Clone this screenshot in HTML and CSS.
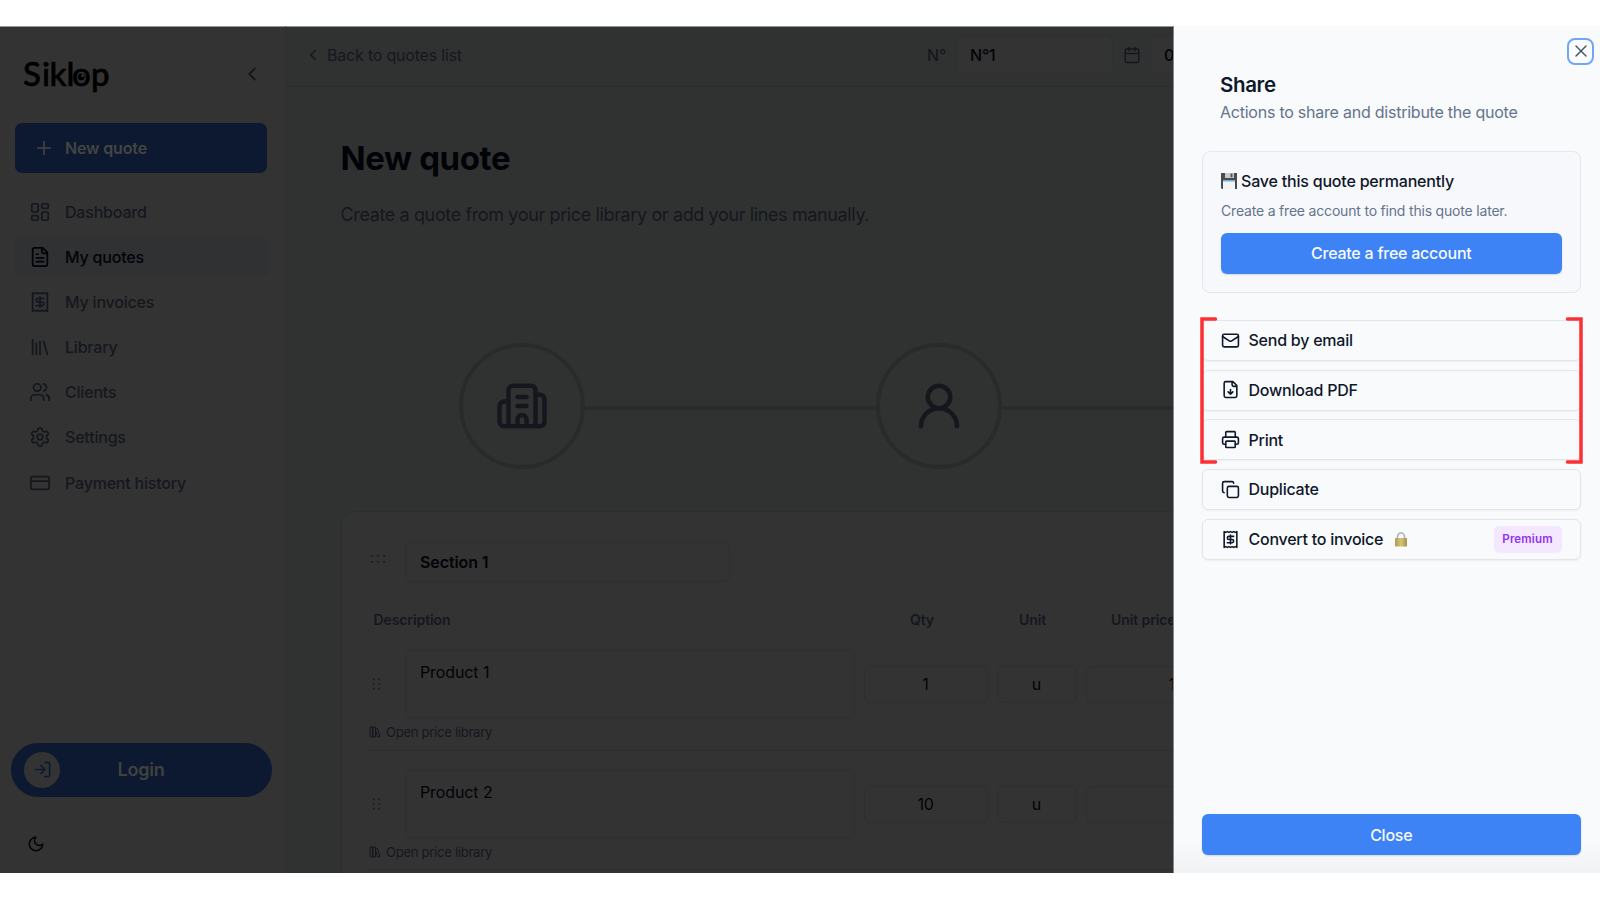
FILE: index.html
```html
<!DOCTYPE html>
<html lang="en">
<head>
<meta charset="utf-8">
<title>Siklop - New quote</title>
<link rel="stylesheet" href="styles.css">
</head>
<body>
<svg class="defs" width="0" height="0">
  <symbol id="receipt" viewBox="0 0 24 24"><path d="M4 2v20l2-1 2 1 2-1 2 1 2-1 2 1 2-1 2 1V2l-2 1-2-1-2 1-2-1-2 1-2-1-2 1Z"/><path d="M16 8h-6a2 2 0 1 0 0 4h4a2 2 0 1 1 0 4H8M12 17.5v-11"/></symbol>
  <symbol id="grip" viewBox="0 0 24 24"><circle cx="7" cy="12" r="1"/><circle cx="7" cy="5" r="1"/><circle cx="7" cy="19" r="1"/><circle cx="15" cy="12" r="1"/><circle cx="15" cy="5" r="1"/><circle cx="15" cy="19" r="1"/></symbol>
  <symbol id="books" viewBox="0 0 24 24"><rect x="2" y="2" width="6" height="20" rx="1"/><path d="M8 2h5v20H8zM13 6l4-1 5 16-4 1z"/></symbol>
</svg>
<div class="app">
  <aside class="sidebar">
    <div class="brand">
      <svg class="logo" viewBox="0 0 90 40"><text y="31.500" x="0 19 26.500 43.500 49 68">Siklop</text><circle class="iris" cx="58.300" cy="22.900" r="3.400"/><circle class="glint" cx="59.500" cy="21.600" r="1.200"/></svg>
      <svg class="i collapse" viewBox="0 0 24 24"><path d="m15 18-6-6 6-6"/></svg>
    </div>
    <div class="new-btn"><svg class="i" viewBox="0 0 24 24"><path d="M5 12h14M12 5v14"/></svg><span>New quote</span></div>
    <nav class="nav">
      <a><svg class="i" viewBox="0 0 24 24"><rect x="3" y="3" width="7" height="9" rx="1"/><rect x="14" y="3" width="7" height="5" rx="1"/><rect x="14" y="12" width="7" height="9" rx="1"/><rect x="3" y="16" width="7" height="5" rx="1"/></svg><span>Dashboard</span></a>
      <a class="active"><svg class="i" viewBox="0 0 24 24"><path d="M15 2H6a2 2 0 0 0-2 2v16a2 2 0 0 0 2 2h12a2 2 0 0 0 2-2V7ZM14 2v4a2 2 0 0 0 2 2h4M10 9H8M16 13H8M16 17H8"/></svg><span>My quotes</span></a>
      <a><svg class="i"><use href="#receipt"/></svg><span>My invoices</span></a>
      <a><svg class="i" viewBox="0 0 24 24"><path d="m16 6 4 14M12 6v14M8 8v12M4 4v16"/></svg><span>Library</span></a>
      <a><svg class="i" viewBox="0 0 24 24"><path d="M16 21v-2a4 4 0 0 0-4-4H6a4 4 0 0 0-4 4v2M22 21v-2a4 4 0 0 0-3-3.870M16 3.130a4 4 0 0 1 0 7.750"/><circle cx="9" cy="7" r="4"/></svg><span>Clients</span></a>
      <a><svg class="i" viewBox="0 0 24 24"><path d="M9.671 4.136a2.340 2.340 0 0 1 4.659 0 2.340 2.340 0 0 0 3.319 1.915 2.340 2.340 0 0 1 2.330 4.033 2.340 2.340 0 0 0 0 3.831 2.340 2.340 0 0 1-2.330 4.033 2.340 2.340 0 0 0-3.319 1.915 2.340 2.340 0 0 1-4.659 0 2.340 2.340 0 0 0-3.320-1.915 2.340 2.340 0 0 1-2.330-4.033 2.340 2.340 0 0 0 0-3.831A2.340 2.340 0 0 1 6.350 6.051a2.340 2.340 0 0 0 3.319-1.915"/><circle cx="12" cy="12" r="3"/></svg><span>Settings</span></a>
      <a><svg class="i" viewBox="0 0 24 24"><rect x="2" y="5" width="20" height="14" rx="2"/><path d="M2 10h20"/></svg><span>Payment history</span></a>
    </nav>
    <div class="login"><span class="login-icon"><svg class="i" viewBox="0 0 24 24"><path d="M15 3h4a2 2 0 0 1 2 2v14a2 2 0 0 1-2 2h-4M10 17l5-5-5-5M15 12H3"/></svg></span><span class="login-text">Login</span></div>
    <svg class="i moon" viewBox="0 0 24 24"><path d="M12 3a6 6 0 0 0 9 9 9 9 0 1 1-9-9Z"/></svg>
  </aside>
  <main class="main">
    <header class="topbar">
      <svg class="i back" viewBox="0 0 24 24"><path d="m15 18-6-6 6-6"/></svg>
      <span class="back-text">Back to quotes list</span>
      <span class="num-label">N°</span>
      <span class="field num">N°1</span>
      <svg class="i cal" viewBox="0 0 24 24"><path d="M8 2v4M16 2v4M3 10h18"/><rect x="3" y="4" width="18" height="18" rx="2"/></svg>
      <span class="field date">0</span>
    </header>
    <h1>New quote</h1>
    <p class="subtitle">Create a quote from your price library or add your lines manually.</p>
    <div class="steps">
      <div class="step"><svg class="i" viewBox="0 0 24 24"><path d="M10 12h4M10 8h4M14 21v-3a2 2 0 0 0-4 0v3M6 10H4a2 2 0 0 0-2 2v7a2 2 0 0 0 2 2h16a2 2 0 0 0 2-2V9a2 2 0 0 0-2-2h-2M6 21V5a2 2 0 0 1 2-2h8a2 2 0 0 1 2 2v16"/></svg></div>
      <div class="link"></div>
      <div class="step"><svg class="i" viewBox="0 0 24 24"><circle cx="12" cy="8" r="5"/><path d="M20 21a8 8 0 0 0-16 0"/></svg></div>
      <div class="link"></div>
    </div>
    <section class="card">
      <div class="section-row">
        <svg class="i grip-h" viewBox="0 0 24 24"><circle cx="12" cy="9" r="1"/><circle cx="20" cy="9" r="1"/><circle cx="4" cy="9" r="1"/><circle cx="12" cy="17" r="1"/><circle cx="20" cy="17" r="1"/><circle cx="4" cy="17" r="1"/></svg>
        <span class="field section-name">Section 1</span>
      </div>
      <div class="heads"><span>Description</span><span>Qty</span><span>Unit</span><span>Unit price</span></div>
      <div class="line">
        <div class="line-fields"><svg class="i grip"><use href="#grip"/></svg><div class="field desc">Product 1</div><div class="field qty">1</div><div class="field unit">u</div><div class="field price">1</div></div>
        <div class="lib"><svg class="i"><use href="#books"/></svg><span>Open price library</span></div>
      </div>
      <div class="line">
        <div class="line-fields"><svg class="i grip"><use href="#grip"/></svg><div class="field desc">Product 2</div><div class="field qty">10</div><div class="field unit">u</div><div class="field price"></div></div>
        <div class="lib"><svg class="i"><use href="#books"/></svg><span>Open price library</span></div>
      </div>
    </section>
  </main>
  <aside class="panel">
    <button class="x"><svg class="i" viewBox="0 0 24 24"><path d="M18 6 6 18M6 6l12 12"/></svg></button>
    <h2>Share</h2>
    <p class="lead">Actions to share and distribute the quote</p>
    <div class="save">
      <div class="save-title">
        <svg class="disk" viewBox="0 0 16 16"><path d="M0 0h16v16H1L0 15z" fill="#4b4b4d"/><path d="M4 0h9v5H4z" fill="#c9cacc"/><path d="M9.500 .5h2v3.800h-2z" fill="#555"/><path d="M2 7h12v9H2z" fill="#f3f3f3"/><path d="M2 7h12v1.500H2z" fill="#6fb0e8"/></svg>
        <span>Save this quote permanently</span>
      </div>
      <p>Create a free account to find this quote later.</p>
      <button class="primary">Create a free account</button>
    </div>
    <div class="actions">
      <div class="act"><svg class="i" viewBox="0 0 24 24"><rect x="2" y="4" width="20" height="16" rx="2"/><path d="m22 7-8.970 5.700a1.940 1.940 0 0 1-2.060 0L2 7"/></svg><span>Send by email</span></div>
      <div class="act"><svg class="i" viewBox="0 0 24 24"><path d="M15 2H6a2 2 0 0 0-2 2v16a2 2 0 0 0 2 2h12a2 2 0 0 0 2-2V7ZM14 2v4a2 2 0 0 0 2 2h4M12 18v-6M9 15l3 3 3-3"/></svg><span>Download PDF</span></div>
      <div class="act"><svg class="i" viewBox="0 0 24 24"><path d="M6 18H4a2 2 0 0 1-2-2v-5a2 2 0 0 1 2-2h16a2 2 0 0 1 2 2v5a2 2 0 0 1-2 2h-2M6 9V3a1 1 0 0 1 1-1h10a1 1 0 0 1 1 1v6"/><rect x="6" y="14" width="12" height="8" rx="1"/></svg><span>Print</span></div>
      <div class="act"><svg class="i" viewBox="0 0 24 24"><rect x="8" y="8" width="14" height="14" rx="2"/><path d="M4 16c-1.100 0-2-.9-2-2V4c0-1.100.9-2 2-2h10c1.100 0 2 .9 2 2"/></svg><span>Duplicate</span></div>
      <div class="act"><svg class="i"><use href="#receipt"/></svg><span>Convert to invoice</span>
        <svg class="lock" viewBox="0 0 12 15"><defs><linearGradient id="gold"><stop offset="0" stop-color="#b09a50"/><stop offset=".5" stop-color="#d6c47c"/><stop offset="1" stop-color="#a39049"/></linearGradient></defs><path d="M2.500 7V4.500a3.500 3.500 0 0 1 7 0V7" fill="none" stroke="#a9b0b8" stroke-width="1.500"/><rect y="6" width="12" height="8.500" rx=".8" fill="url(#gold)"/></svg>
        <b class="badge">Premium</b></div>
      <svg class="marks" viewBox="0 0 383 147"><path d="M15.500 2H2v143h13.500M367.500 2H381v143h-13.500"/></svg>
    </div>
    <button class="primary close">Close</button>
  </aside>
</div>
</body>
</html>
```
FILE: styles.css
```css
* { box-sizing: border-box; }
body { margin: 0; padding-top: 26px; height: 900px; overflow: hidden; background: #fff; font-family: Inter, "Liberation Sans", sans-serif; font-size: 16px; letter-spacing: -.2px; color: #020308; }
h1, h2, p { margin: 0; }
button { font: inherit; letter-spacing: inherit; padding: 0; border: 0; }
.defs { display: block; position: absolute; }
.i { fill: none; stroke: currentColor; stroke-width: 2; stroke-linecap: round; stroke-linejoin: round; flex: none; display: block; }
.app { display: grid; grid-template-columns: 286px 887px 427px; height: 847px; overflow: hidden; }

.sidebar { background: #333; border-top: 1px solid #8f9494; border-right: 1px solid #2e2f30; display: flex; flex-direction: column; color: #15171e; overflow: hidden; }
.brand { height: 96px; padding: 27px 0 0 23px; display: flex; }
.logo { width: 90px; height: 40px; overflow: visible; }
.logo text { font: 500 33px Lato, sans-serif; letter-spacing: 0; fill: #000; stroke: #000; stroke-width: .6; }
.iris { fill: #000; }
.glint { fill: #444; }
.collapse { width: 22px; height: 22px; margin: 9px 0 0 128px; }
.new-btn { margin-left: 15px; width: 252px; height: 50px; border-radius: 7px; background: #0c1930; color: #444443; font-weight: 600; letter-spacing: -.15px; display: flex; align-items: center; padding-left: 18px; }
.new-btn .i { width: 22px; height: 22px; margin-right: 10px; stroke-width: 1.7; }
.nav { margin: 18.500px 0 0 15px; width: 253px; display: flex; flex-direction: column; gap: 5.200px; font-weight: 500; }
.nav a { height: 40px; display: flex; align-items: center; padding-left: 14px; border-radius: 6px; }
.nav .i { width: 22px; height: 22px; margin-right: 14px; stroke-width: 1.900; }
.nav .active { background: #303133; color: #020308; }
.login { margin: 240px 0 0 10.500px; width: 261.500px; height: 54.500px; border-radius: 28px; background: #0c1930; display: flex; align-items: center; flex: none; }
.login-icon { width: 36px; height: 36px; border-radius: 50%; background: #333; margin-left: 13.500px; display: grid; place-items: center; color: #0c1930; }
.login-icon .i { width: 19px; height: 19px; }
.login-text { margin-left: 57.500px; color: #41423f; font-size: 18px; font-weight: 600; }
.moon { width: 18px; height: 18px; margin: 37.500px 0 0 26.500px; color: #020308; }

.main { background: #303231; border-top: 1px solid #8f9494; overflow: hidden; color: #15171e; }
.topbar { height: 60px; border-bottom: 1px solid #2b2c2d; display: flex; align-items: center; padding-bottom: 3px; width: 1200px; }
.back { width: 18px; height: 18px; margin-left: 18px; }
.back-text { margin-left: 5px; width: 600px; }
.num-label { width: 29px; font-weight: 500; }
.field { background: #333; border: 1px solid #2e2f30; border-radius: 6px; color: #020308; display: flex; align-items: center; flex: none; }
.num { width: 157px; height: 38px; padding-left: 13px; font-weight: 500; }
.cal { width: 18px; height: 18px; margin: 0 9px 0 10px; }
.date { width: 160px; height: 38px; padding-left: 13px; font-weight: 500; }
h1 { margin: 51px 0 0 54.500px; font-size: 33px; line-height: 40px; letter-spacing: -.4px; color: #020308; }
.subtitle { margin: 25px 0 0 54.500px; font-size: 18px; line-height: 24px; letter-spacing: -.375px; white-space: nowrap; }
.steps { display: flex; align-items: center; margin: 116px 0 0 173px; width: 900px; }
.step { width: 126px; height: 126px; border: 4.500px solid #292a2c; border-radius: 50%; display: grid; place-items: center; flex: none; }
.step .i { width: 54px; height: 54px; }
.link { width: 290.500px; height: 4px; background: #292a2c; flex: none; margin-top: 3px; }
.card { margin: 42px 0 0 54.500px; width: 1100px; height: 500px; border: 1px solid #2c2d2d; border-radius: 14px; background: #333; padding: 30px 0 0 26.500px; }
.section-row { display: flex; height: 40px; }
.grip-h { width: 18px; height: 18px; margin: 7px 18px 0 1px; stroke-width: 1; color: #1d1e20; }
.section-name { width: 325px; padding-left: 14px; font-weight: 600; letter-spacing: -.1px; }
.heads { display: grid; grid-template-columns: 536.500px 109px 92px 100px; padding-left: 5.500px; margin-top: 28px; height: 20px; line-height: 20px; font-size: 14px; letter-spacing: -.1px; font-weight: 600; }
.line { height: 119px; padding-top: 19px; border-bottom: 1px solid #2d2e2e; }
.heads + .line { padding-top: 20px; height: 121px; }
.line-fields { display: flex; align-items: center; height: 68px; }
.grip { width: 16px; height: 16px; margin: 0 20px 0 1px; stroke-width: 1; color: #1d1e20; }
.desc { width: 449.500px; height: 68px; align-items: flex-start; padding: 11px 14px; line-height: 20px; letter-spacing: -.1px; margin-right: 9px; }
.qty, .unit, .price { height: 37px; justify-content: center; }
.qty { width: 124px; margin-right: 9px; }
.unit { width: 80px; margin-right: 9px; }
.price { width: 173px; }
.lib { display: flex; align-items: center; height: 28px; font-size: 13px; }
.lib .i { width: 12px; height: 12px; margin: 0 5px 0 1px; }
.lib span { letter-spacing: -.25px; }

.panel { background: linear-gradient(#f8fafc 0 calc(100% - 32px), #f1f2f4); border-left: 1px solid #85878a; padding: 11.500px 19.500px 18px 28px; display: flex; flex-direction: column; color: #0f172a; overflow: hidden; }
.x { align-self: flex-end; width: 27px; height: 27px; margin-right: -13.500px; border: 2px solid #72a4f8; border-radius: 8px; background: #fbfcfe; display: grid; place-items: center; color: #4a5160; flex: none; }
.x .i { width: 20px; height: 20px; stroke-width: 1.700; }
h2 { margin: 6.500px 0 0 18px; font-size: 20.500px; line-height: 28px; font-weight: 600; letter-spacing: -.35px; }
.lead { margin: 1px 0 0 18px; line-height: 24px; letter-spacing: -.235px; color: #64748b; white-space: nowrap; }
.save { margin-top: 27px; height: 142px; border: 1px solid #e4e7ec; border-radius: 8px; background: #f7f8fc; padding: 17px 18px; flex: none; white-space: nowrap; }
.save-title { display: flex; align-items: center; height: 24px; font-weight: 500; }
.disk { width: 16px; height: 16px; margin-right: 4px; }
.save p { margin-top: 8px; font-size: 14px; line-height: 20px; letter-spacing: -.19px; color: #64748b; }
.primary { display: block; width: 100%; height: 41px; border-radius: 6px; background: #3d83f6; color: #f8fafc; font-weight: 500; letter-spacing: -.24px; padding-bottom: 1px; box-shadow: 0 1px 2px #0002; flex: none; }
.save .primary { margin-top: 12px; }
.actions { margin-top: 27px; display: flex; flex-direction: column; gap: 8.700px; position: relative; }
.act { height: 41px; border: 1px solid #e2e5ea; border-radius: 6px; box-shadow: 0 1px 2px #0000000d; display: flex; align-items: center; padding: 0 18px .5px 17.500px; font-weight: 500; letter-spacing: -.24px; }
.act .i { width: 19px; height: 19px; margin-right: 9px; }
.lock { width: 12px; height: 15px; margin-left: 11.500px; }
.badge { margin-left: auto; width: 68px; height: 27px; border-radius: 5px; background: #f3e8ff; color: #9333ea; font-size: 11.500px; font-weight: 600; letter-spacing: .15px; display: grid; place-items: center; }
/* Red corner brackets laid over the first three actions */
.marks { position: absolute; left: -2px; top: -3px; width: 383px; height: 147px; fill: none; stroke: #fc3033; stroke-width: 3.500; stroke-linecap: round; }
.close { margin-top: auto; padding: 0; }
```
